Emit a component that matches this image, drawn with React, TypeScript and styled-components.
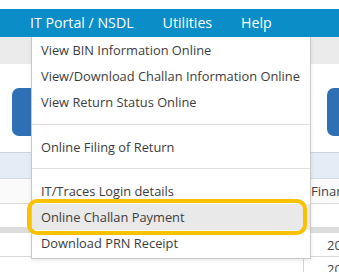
import React from "react";
import styled, { createGlobalStyle } from "styled-components";

const GlobalStyle = createGlobalStyle`
  body {
    margin: 0;
    background: #fff;
    font-family: "Open Sans", "Noto Sans", sans-serif;
  }
`;

const Page = styled.div`
  position: relative;
  width: 339px;
  height: 272px;
  overflow: hidden;
  background: #fff;
`;

const TopGap = styled.div`
  height: 9px;
`;

const NavBar = styled.nav`
  height: 28px;
  background: #0b8dc7;
  display: flex;
  align-items: center;
  padding-left: 30px;
  gap: 29px;
`;

const NavItem = styled.span`
  color: #fff;
  font-size: 14.2px;
  line-height: 28px;
  white-space: nowrap;
`;

const SubBar = styled.div`
  height: 27px;
  background: #ebebeb;
`;

const ButtonRow = styled.div`
  display: flex;
  justify-content: space-between;
  padding: 24px 0 0 12px;
  height: 89px;
  box-sizing: border-box;
  border-bottom: 1px solid #c9d3de;
`;

const BigButton = styled.div<{ $width: number }>`
  width: ${(p) => p.$width}px;
  height: 48px;
  background: #2f70b5;
  border-radius: 7px 0 0 7px;
`;

const Table = styled.div`
  display: flex;
  flex-direction: column;
`;

const Row = styled.div<{ $h: number; $bg?: string; $line?: boolean }>`
  height: ${(p) => p.$h}px;
  background: ${(p) => p.$bg || "#fff"};
  border-bottom: ${(p) => (p.$line ? "1px solid #d9d9d9" : "none")};
  display: flex;
  justify-content: flex-end;
  align-items: center;
  box-sizing: border-box;
`;

const Cell = styled.div<{ $w: number; $pad: number; $border?: boolean }>`
  width: ${(p) => p.$w}px;
  height: 100%;
  display: flex;
  align-items: center;
  box-sizing: border-box;
  padding-left: ${(p) => p.$pad}px;
  border-left: ${(p) => (p.$border ? "1px solid #d4d4d4" : "none")};
  font-size: 13px;
  color: #444;
  white-space: nowrap;
  overflow: hidden;
`;

const Menu = styled.ul`
  position: absolute;
  left: 31px;
  top: 37px;
  width: 280px;
  margin: 0;
  padding: 0 0 2px;
  list-style: none;
  background: #fff;
  border: 1px solid #c8c8c8;
  border-top: none;
  box-sizing: border-box;
  box-shadow: 0 2px 4px rgba(0, 0, 0, 0.08);
`;

const MenuItem = styled.li<{ $active?: boolean }>`
  height: 26px;
  display: flex;
  align-items: center;
  padding-left: 9px;
  font-size: 12.85px;
  color: #3d3d3d;
  white-space: nowrap;
  background: ${(p) => (p.$active ? "#e9e9e9" : "#fff")};
`;

const Divider = styled.li`
  height: 18.5px;
  display: flex;
  align-items: center;
  &::after {
    content: "";
    flex: 1;
    border-top: 1px solid #dedede;
  }
`;

const Highlight = styled.div`
  position: absolute;
  left: 27px;
  top: 199px;
  width: 280px;
  height: 36px;
  border: 4px solid #f8c200;
  border-radius: 10px;
  box-sizing: border-box;
  pointer-events: none;
`;

const menu: (string | null)[] = [
  "View BIN Information Online",
  "View/Download Challan Information Online",
  "View Return Status Online",
  null,
  "Online Filing of Return",
  null,
  "IT/Traces Login details",
  "Online Challan Payment",
  "Download PRN Receipt",
];

export default function App() {
  return (
    <Page>
      <GlobalStyle />
      <TopGap />
      <NavBar>
        <NavItem>IT Portal / NSDL</NavItem>
        <NavItem>Utilities</NavItem>
        <NavItem>Help</NavItem>
      </NavBar>
      <SubBar />
      <ButtonRow>
        <BigButton $width={120} />
        <BigButton $width={12} />
      </ButtonRow>
      <Table>
        <Row $h={26} $bg="#e4ecf6" $line />
        <Row $h={25} $bg="#fafafa" $line>
          <Cell $w={29} $pad={1}>
            Financial Year
          </Cell>
        </Row>
        <Row $h={23} />
        <Row $h={6} $bg="#dcdcdc" />
        <Row $h={24} $line>
          <Cell $w={13} $pad={1}>
            2024-25
          </Cell>
        </Row>
        <Row $h={24}>
          <Cell $w={36} $pad={23} $border>
            2023-24
          </Cell>
        </Row>
      </Table>
      <Menu>
        {menu.map((m, i) =>
          m === null ? (
            <Divider key={i} />
          ) : (
            <MenuItem key={i} $active={m === "Online Challan Payment"}>
              {m}
            </MenuItem>
          )
        )}
      </Menu>
      <Highlight />
    </Page>
  );
}
